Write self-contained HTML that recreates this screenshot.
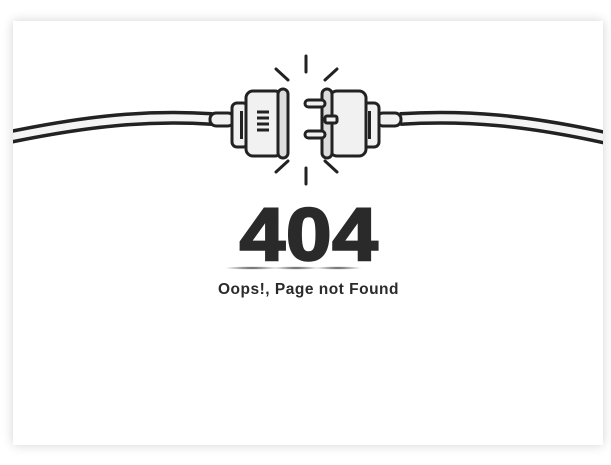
<!DOCTYPE html>
<html><head><style>
html,body{margin:0;padding:0;background:#fff;width:611px;height:465px;overflow:hidden;font-family:"Liberation Sans",sans-serif}
.card{position:absolute;left:13px;top:21px;width:590px;height:424px;background:#fff;box-shadow:0 0 10px rgba(0,0,0,0.18)}
.t404{position:absolute;left:4px;width:611px;top:192px;text-align:center;font-size:74px;font-weight:bold;color:#2a2a2a;letter-spacing:1px;-webkit-text-stroke:2.5px #2a2a2a;transform:scaleX(1.1);transform-origin:308px 0}
.msg{position:absolute;left:0;width:617px;top:281px;text-align:center;font-size:15.5px;font-weight:bold;color:#2a2a2a;letter-spacing:0.5px}
</style></head><body>
<div class="card"></div>
<svg width="611" height="465" style="position:absolute;left:0;top:0">
<defs><radialGradient id="sh"><stop offset="0" stop-color="#222" stop-opacity=".9"/><stop offset="1" stop-color="#333" stop-opacity="0"/></radialGradient>
<clipPath id="c"><rect x="13" y="21" width="590" height="424"/></clipPath></defs>
<g fill="none" clip-path="url(#c)">
<path d="M0 139 C90 120,150 115,212 119" stroke="#222" stroke-width="14"/>
<path d="M0 139 C90 120,150 115,212 119" stroke="#f4f4f4" stroke-width="7"/>
<path d="M611 139 C526 120,466 115,400 119" stroke="#222" stroke-width="14"/>
<path d="M611 139 C526 120,466 115,400 119" stroke="#f4f4f4" stroke-width="7"/>
</g>
<g stroke="#222" stroke-width="3" fill="#f0f1f0">
<rect x="210" y="113" width="24" height="13" rx="6"/>
<rect x="232" y="103" width="16" height="44" rx="5"/>
<rect x="246" y="91" width="36" height="65" rx="7"/>
<rect x="278" y="89" width="10" height="69" rx="5" fill="#ddd"/>
<path d="M257 112h12M257 118h12M257 124h12M257 130h12" fill="none"/>
<rect x="240" y="111" width="3" height="28" fill="#222" stroke="none"/>
<rect x="377" y="113" width="24" height="13" rx="6"/>
<rect x="363" y="103" width="16" height="44" rx="5"/>
<rect x="330" y="91" width="36" height="65" rx="7"/>
<rect x="322" y="89" width="10" height="69" rx="5" fill="#ddd"/>
<rect x="368" y="111" width="3" height="28" fill="#222" stroke="none"/>
<rect x="305" y="100" width="20" height="7" rx="3.5"/>
<rect x="305" y="131" width="20" height="7" rx="3.5"/>
<rect x="325" y="116" width="12" height="7" rx="2"/>
</g>
<g stroke="#222" stroke-width="3" stroke-linecap="round">
<path d="M306 56v16M276 69l12 11M337 69l-12 11M306 168v16M276 172l12-11M337 172l-12-11"/>
</g>
<ellipse cx="252" cy="268" rx="28" ry="1.6" fill="url(#sh)"/>
<ellipse cx="296" cy="268" rx="24" ry="1.6" fill="url(#sh)"/>
<ellipse cx="338" cy="268" rx="24" ry="1.6" fill="url(#sh)"/>
</svg>
<div class="t404">404</div>
<div class="msg">Oops!, Page not Found</div>
</body></html>
